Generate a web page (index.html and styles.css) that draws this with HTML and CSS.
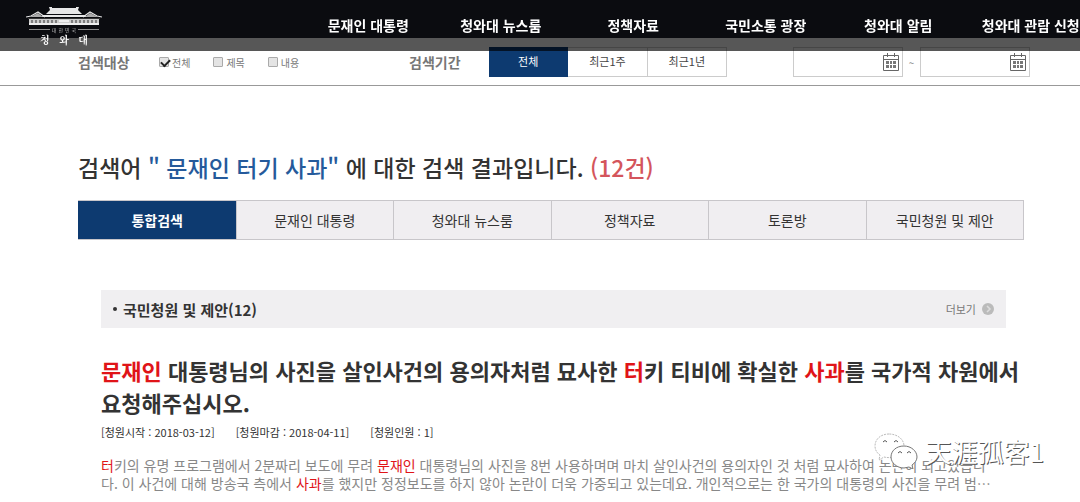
FILE: index.html
```html
<!DOCTYPE html>
<html lang="ko">
<head>
  <meta charset="UTF-8">
  <meta name="viewport" content="width=device-width, initial-scale=1.0">
  <title>청와대 통합검색</title>
  <link rel="stylesheet" href="styles.css">
</head>
<body>
  <header class="header">
    <a href="#" class="logo">
      <svg class="logo-roof" viewBox="0 0 76 20" aria-hidden="true">
        <path fill="#e8e8e8" d="M23 0h3v1h24v-1h3l-1 3 4 4h-36l4-4z"/>
        <path fill="#e8e8e8" d="M17 8h42l2 2H15z"/>
        <path fill="none" stroke="#e8e8e8" stroke-width="1.2" d="M0 10l5-1 7-4 7 5M76 10l-5-1-7-4-7 5"/>
        <path fill="#aaa" d="M6 9l6-3 5 4H3zM70 9l-6-3-5 4h14z"/>
        <path fill="#ccc" d="M3 11h70v7H3z"/>
        <path stroke="#333" stroke-width="1" d="M6 13v3M10 13v3M14 13v3M18 13v3M22 13v3M26 13v3M30 13v3M46 13v3M50 13v3M54 13v3M58 13v3M62 13v3M66 13v3M70 13v3M2 11.500h72"/>
        <path fill="#eee" d="M3 16h70v2H3zM33 13h10v2H33z"/>
      </svg>
      <span class="logo-sub"><span>대</span><span>한</span><span>민</span><span>국</span></span>
      <span class="logo-name"><span>청</span><span>와</span><span>대</span></span>
    </a>
    <nav class="nav">
      <a href="#">문재인 대통령</a>
      <a href="#">청와대 뉴스룸</a>
      <a href="#">정책자료</a>
      <a href="#">국민소통 광장</a>
      <a href="#">청와대 알림</a>
      <a href="#">청와대 관람 신청</a>
    </nav>
  </header>

  <form class="filter">
    <strong class="filter-title">검색대상</strong>
    <div class="checks">
      <label><input type="checkbox" checked>전체</label>
      <label><input type="checkbox">제목</label>
      <label><input type="checkbox">내용</label>
    </div>
    <strong class="filter-title">검색기간</strong>
    <div class="periods">
      <button type="button" class="on">전체</button>
      <button type="button">최근1주</button>
      <button type="button">최근1년</button>
    </div>
    <div class="dates">
      <div class="date">
        <input type="text" aria-label="시작일">
        <svg viewBox="0 0 16 18" aria-hidden="true">
          <path fill="none" stroke="#666" d="M.5 2.500h15v15H.5zM.5 6.500h15M4.500 0v4M11.500 0v4"/>
          <path fill="#777" d="M3 8h3v3H3zM7 8h2v3H7zM10 8h3v3h-3zM3 12h3v3H3zM7 12h2v3H7zM10 12h3v3h-3z"/>
        </svg>
      </div>
      <span>~</span>
      <div class="date">
        <input type="text" aria-label="종료일">
        <svg viewBox="0 0 16 18" aria-hidden="true">
          <path fill="none" stroke="#666" d="M.5 2.500h15v15H.5zM.5 6.500h15M4.500 0v4M11.500 0v4"/>
          <path fill="#777" d="M3 8h3v3H3zM7 8h2v3H7zM10 8h3v3h-3zM3 12h3v3H3zM7 12h2v3H7zM10 12h3v3h-3z"/>
        </svg>
      </div>
    </div>
  </form>

  <main class="content">
    <h1>검색어 <span class="keyword">" 문재인 터기 사과"</span> 에 대한 검색 결과입니다. <span class="count">(12건)</span></h1>

    <div class="tabs">
      <a href="#" class="on">통합검색</a>
      <a href="#">문재인 대통령</a>
      <a href="#">청와대 뉴스룸</a>
      <a href="#">정책자료</a>
      <a href="#">토론방</a>
      <a href="#">국민청원 및 제안</a>
    </div>

    <section class="result">
      <div class="result-head">
        <h2>국민청원 및 제안(12)</h2>
        <a href="#" class="more">더보기
          <svg viewBox="0 0 12 12" aria-hidden="true">
            <circle cx="6" cy="6" r="6" fill="#bbb"/>
            <path fill="none" stroke="#ddd" stroke-width="1.500" d="M5 3l3 3-3 3"/>
          </svg>
        </a>
      </div>
      <article>
        <h3><em>문재인</em> 대통령님의 사진을 살인사건의 용의자처럼 묘사한 <em>터</em>키 티비에 확실한 <em>사과</em>를 국가적 차원에서<br>요청해주십시오.</h3>
        <div class="meta">
          <span>[청원시작 : 2018-03-12]</span>
          <span>[청원마감 : 2018-04-11]</span>
          <span>[청원인원 : 1]</span>
        </div>
        <p><em>터</em>키의 유명 프로그램에서 2분짜리 보도에 무려 <em>문재인</em> 대통령님의 사진을 8번 사용하며며 마치 살인사건의 용의자인 것 처럼 묘사하여 논란이 되고있습니<br>다. 이 사건에 대해 방송국 측에서 <em>사과</em>를 했지만 정정보도를 하지 않아 논란이 더욱 가중되고 있는데요. 개인적으로는 한 국가의 대통령의 사진을 무려 범…</p>
      </article>
    </section>
  </main>

  <div class="watermark">
    <svg viewBox="0 0 44 36" aria-hidden="true">
      <path fill="#fff" stroke="#bbb" stroke-dasharray="2 1" d="M15 1C7 1 1 6 1 13c0 4 2 7 5 9l-1 5 5-3c8 2 20-1 20-11C30 6 23 1 15 1z"/>
      <path fill="#fff" stroke="#777" d="M30 13c-8 0-13 5-13 11s6 11 13 11l5-1 4 2-1-4c3-2 5-5 5-8 0-6-6-11-13-11z"/>
      <path fill="none" stroke="#555" d="M9 9q2-3 4 0M20 9q2-3 4 0M24 20q2-3 4 0M33 20q2-3 4 0"/>
    </svg>
    <span>天涯孤客1</span>
  </div>
</body>
</html>
```
FILE: styles.css
```css
* {
  box-sizing: border-box;
}
body {
  margin: 0;
  background: #fff;
  color: #333;
  font-family: "Noto Sans CJK KR", sans-serif;
  overflow-x: hidden;
}
a {
  color: inherit;
  text-decoration: none;
}
em {
  color: #e01418;
  font-style: normal;
}

/* header */
.header {
  position: fixed;
  top: 0;
  left: 0;
  right: 0;
  z-index: 10;
  display: flex;
  height: 51px;
  background: #0b0c10;
  background-clip: padding-box;
  border-bottom: 13px solid rgba(0, 0, 0, 0.66);
  color: #fff;
}
.logo {
  flex: none;
  width: 76px;
  margin: 7px 200px 0 26px;
}
.logo-roof {
  display: block;
  width: 76px;
  height: 20px;
}
.logo-sub {
  display: flex;
  align-items: center;
  gap: 2px;
  margin: 0 3px;
  color: #bbb;
  font-size: 5px;
  line-height: 5px;
}
.logo-sub::before,
.logo-sub::after {
  content: "";
  flex: 1;
  height: 1px;
  background: #888;
}
.logo-name {
  display: flex;
  justify-content: space-between;
  margin: 1px 14px 0;
  font-family: "Noto Serif CJK KR", "Noto Sans CJK KR", serif;
  font-size: 10px;
  font-weight: bold;
  line-height: 13px;
}
.nav {
  flex: 1;
  display: flex;
  margin-right: -17px;
}
.nav a {
  flex: 1 0 0;
  min-width: 0;
  text-align: center;
  font-size: 14px;
  font-weight: bold;
  line-height: 20px;
  padding-top: 15px;
  white-space: nowrap;
}

/* search filter */
.filter {
  display: grid;
  grid-template-columns: 80px 251fr 80px 238px 66fr 237px;
  align-items: center;
  padding: 47px 50px 8px 78px;
  border-bottom: 1px solid #999;
  font-size: 10px;
}
.filter-title {
  color: #777;
  font-size: 14px;
  line-height: 30px;
}
.checks {
  display: flex;
  gap: 22px;
  color: #777;
}
.checks label {
  display: flex;
  align-items: center;
  gap: 3px;
}
.checks input {
  appearance: none;
  width: 10px;
  height: 10px;
  margin: 0 0 0 1px;
  border: 1px solid #aaa;
  border-radius: 1px;
  background: #e4e4e4;
}
.checks input:checked::before {
  content: "";
  display: block;
  width: 7px;
  height: 4px;
  margin: 1px 0 0 1px;
  border: solid #222;
  border-width: 0 0 2px 2px;
  transform: rotate(-45deg);
}
.periods {
  display: flex;
}
.periods button {
  flex: 1;
  height: 30px;
  padding: 0 0 3px;
  border: 1px solid #ccc;
  border-left: 0;
  background: #fff;
  color: #444;
  font-family: inherit;
  font-size: 11px;
}
.periods .on {
  background: #0d3a70;
  border-color: #0d3a70;
  color: #fff;
}
.dates {
  grid-column: 6;
  display: flex;
  align-items: center;
  justify-content: space-between;
  color: #888;
}
.date {
  position: relative;
  width: 110px;
}
.date input {
  display: block;
  width: 100%;
  height: 30px;
  padding: 0 24px 0 6px;
  border: 1px solid #ccc;
}
.date svg {
  position: absolute;
  right: 4px;
  top: 6px;
  width: 16px;
  height: 18px;
}

/* search result */
.content {
  padding: 61px 56px 0 78px;
}
h1 {
  margin: 0 0 13px;
  font-size: 23px;
  font-weight: 500;
  line-height: 40px;
}
.keyword {
  color: #255a9b;
}
.count {
  color: #d4555c;
}
.tabs {
  display: flex;
  border: 1px solid #c8c6ca;
  border-left: 0;
}
.tabs a {
  flex: 1;
  border-left: 1px solid #c8c6ca;
  background: #f0eef1;
  text-align: center;
  font-size: 14px;
  line-height: 38px;
}
.tabs .on {
  background: #0d3a70;
  border-color: #0d3a70;
  color: #fff;
  font-weight: bold;
}
.result {
  margin: 50px 18px 0 23px;
}
.result-head {
  display: flex;
  align-items: center;
  justify-content: space-between;
  height: 38px;
  padding: 0 12px;
  background: #f0eff1;
}
h2 {
  display: flex;
  align-items: center;
  gap: 6px;
  margin: 0;
  font-size: 15px;
  font-weight: bold;
}
h2::before {
  content: "";
  width: 4px;
  height: 4px;
  border-radius: 50%;
  background: #333;
}
.more {
  display: flex;
  align-items: center;
  gap: 6px;
  color: #777;
  font-size: 11px;
}
.more svg {
  width: 12px;
  height: 12px;
}
h3 {
  margin: 26px 0 0;
  font-size: 22px;
  font-weight: bold;
  line-height: 32px;
  white-space: nowrap;
}
.meta {
  display: flex;
  gap: 21px;
  font-size: 11px;
  line-height: 20px;
  margin: 4px 0 14px;
}
.result p {
  margin: 0;
  color: #888;
  font-size: 14px;
  line-height: 18px;
  white-space: nowrap;
}

.watermark {
  position: absolute;
  right: 36px;
  top: 431px;
  display: flex;
  align-items: center;
  gap: 8px;
  color: #fff;
  font-family: "Noto Sans CJK SC", sans-serif;
  font-size: 26px;
  line-height: 40px;
  text-shadow: 1px 1px 0 #555;
}
.watermark svg {
  width: 44px;
  height: 36px;
}
```
